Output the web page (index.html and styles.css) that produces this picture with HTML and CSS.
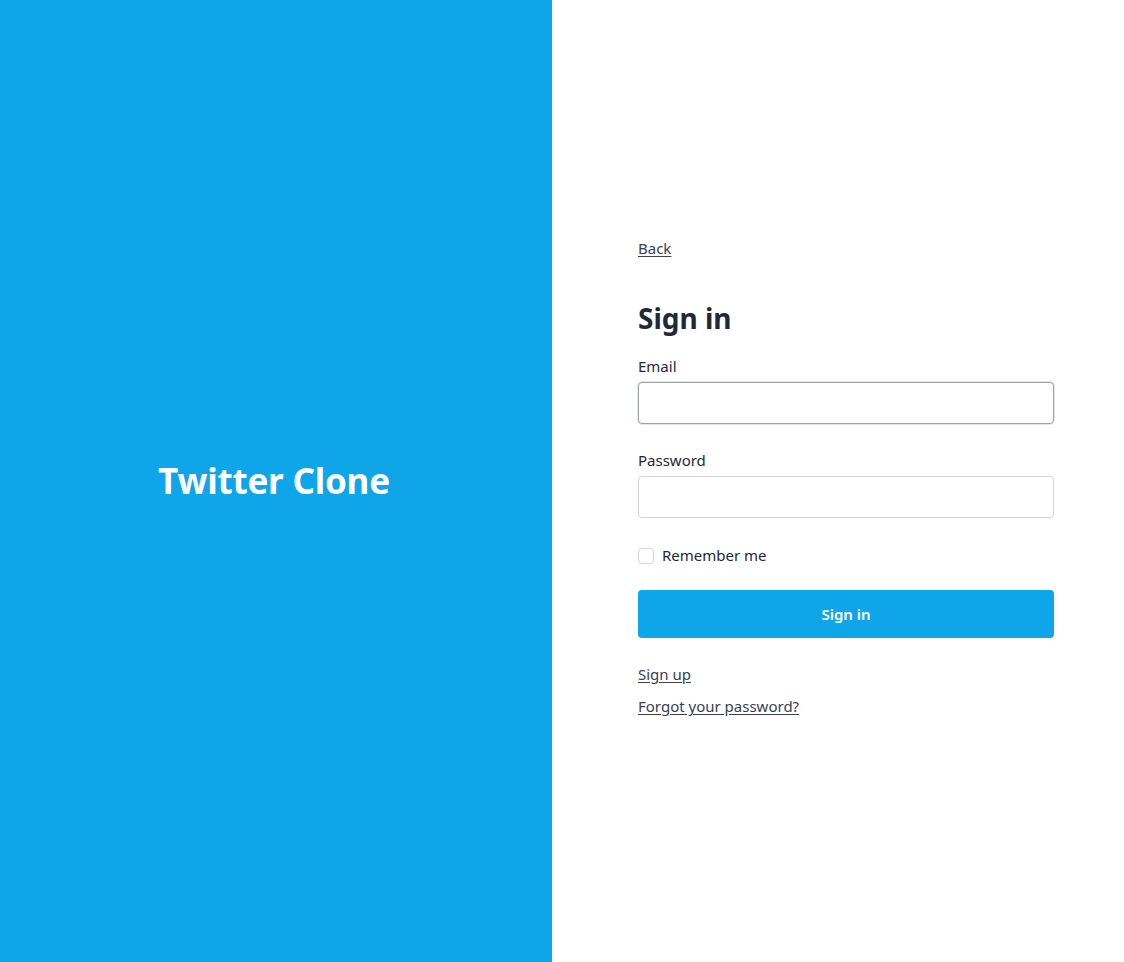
FILE: index.html
```html
<!DOCTYPE html>
<html lang="en">
<head>
<meta charset="utf-8">
<title>Sign in - Twitter Clone</title>
<link rel="stylesheet" href="styles.css">
</head>
<body>
<div class="page">
  <aside class="brand">
    <h1 class="brand-title">Twitter Clone</h1>
  </aside>
  <main class="panel">
    <div class="form-wrap">
      <a class="link back" href="#">Back</a>
      <h2 class="heading">Sign in</h2>
      <form class="form">
        <div class="field">
          <label class="label" for="email">Email</label>
          <input class="input input-focus" id="email" type="email">
        </div>
        <div class="field">
          <label class="label" for="password">Password</label>
          <input class="input" id="password" type="password">
        </div>
        <label class="remember">
          <span class="checkbox"></span>
          <span>Remember me</span>
        </label>
        <button class="button" type="button">Sign in</button>
      </form>
      <div class="links">
        <a class="link" href="#">Sign up</a>
        <a class="link" href="#">Forgot your password?</a>
      </div>
    </div>
  </main>
</div>
</body>
</html>
```
FILE: styles.css
```css
* { box-sizing: border-box; }
html, body { margin: 0; padding: 0; }
body {
  font-family: "Noto Sans", "Open Sans", sans-serif;
  color: #1f2937;
  background: #fff;
}
.page {
  display: flex;
  height: 962px;
}
.brand {
  width: 552px;
  flex: none;
  background: #0ea5e9;
  display: flex;
  align-items: center;
  justify-content: center;
}
.brand-title {
  margin: 0;
  color: #fff;
  font-size: 35px;
  font-weight: 700;
  letter-spacing: -0.2px;
  transform: translate(-2px, -1px);
}
.panel {
  flex: 1;
  display: flex;
  align-items: center;
  padding-left: 86px;
}
.form-wrap {
  width: 416px;
  display: flex;
  flex-direction: column;
  margin-top: -8px;
}
.link {
  color: #374151;
  font-size: 15px;
  text-decoration: underline;
  text-underline-offset: 2px;
  line-height: 22px;
}
.back { align-self: flex-start; }
.heading {
  margin: 41px 0 0;
  font-size: 28px;
  line-height: 36px;
  font-weight: 700;
  color: #1f2937;
}
.form { display: flex; flex-direction: column; margin-top: 19px; }
.field { display: flex; flex-direction: column; margin-bottom: 25px; }
.label {
  font-size: 15px;
  line-height: 22px;
  color: #1f2937;
  margin-bottom: 5px;
}
.input {
  height: 42px;
  width: 100%;
  border: 1px solid #d1d5db;
  border-radius: 4px;
  background: #fff;
  font: inherit;
  padding: 0 12px;
}
.input-focus {
  border-color: #9ca3af;
  box-shadow: 0 0 0 1px #e5e7eb;
}
.remember {
  display: flex;
  align-items: center;
  gap: 8px;
  font-size: 15px;
  line-height: 22px;
  margin-top: 1px;
}
.checkbox {
  width: 16px;
  height: 16px;
  border: 1px solid #d1d5db;
  border-radius: 4px;
  background: #fff;
  margin-top: 2px;
}
.button {
  margin-top: 24px;
  height: 48px;
  border: none;
  border-radius: 4px;
  background: #0ea5e9;
  color: #fff;
  font: inherit;
  font-size: 15px;
  font-weight: 600;
}
.links {
  display: flex;
  flex-direction: column;
  gap: 10px;
  margin-top: 25px;
  align-items: flex-start;
}
```
